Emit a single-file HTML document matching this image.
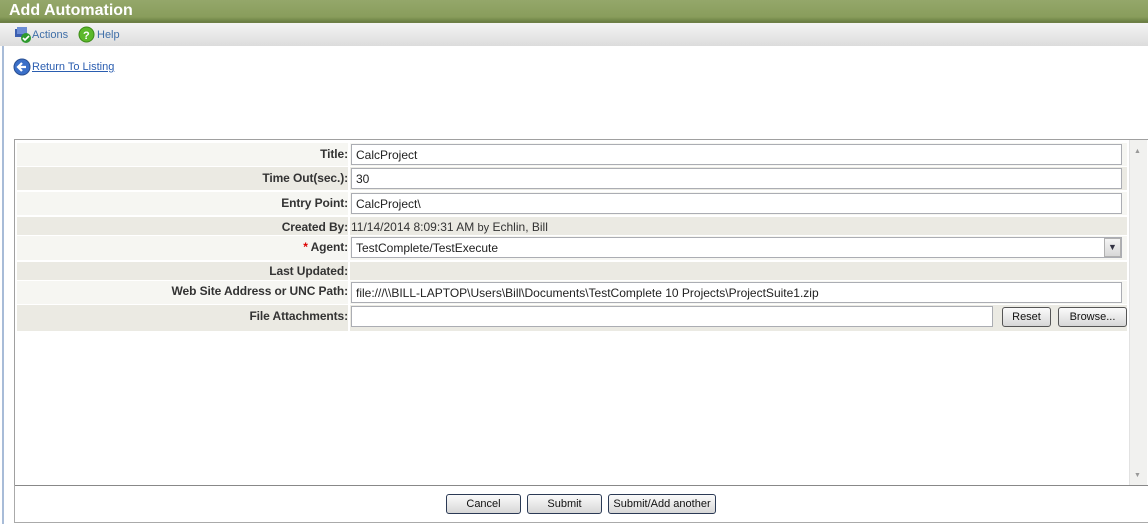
<!DOCTYPE html>
<html><head><meta charset="utf-8"><style>
*{margin:0;padding:0;box-sizing:border-box}
body{width:1148px;height:524px;background:#fff;font-family:"Liberation Sans",Arial,sans-serif;position:relative;overflow:hidden}
.abs{position:absolute}
.title{left:0;top:0;width:1148px;height:23px;background:linear-gradient(#94a76a,#899d5c 80%,#6f8447);color:#fff;font-weight:bold;font-size:16px;padding:2px 0 0 9px;border-bottom:2px solid #6d7f45}
.tool{left:0;top:23px;width:1148px;height:23px;background:linear-gradient(#f4f4f4,#dcdcdc);font-size:11px;color:#3f6fa8}
.lbl{right:800px;font-size:12px;font-weight:bold;color:#333;text-align:right;letter-spacing:-0.1px}
.row{left:17px;width:1110px}
.inp{left:351px;height:21px;border:1px solid #abadb3;background:#fff;font-size:12px;padding:3px 4px;color:#222}
.btn{height:20px;border:1px solid #2b3a55;border-radius:3px;background:linear-gradient(#fafafa,#e6e6e6 60%,#d6d6d6);font-size:11px;text-align:center;line-height:18px;color:#111}
</style></head><body>
<div class="abs" style="left:2px;top:0;width:2px;height:524px;background:#a8bcd8"></div>
<div class="abs title">Add Automation</div>
<div class="abs tool">
 <svg class="abs" style="left:14px;top:4px" width="18" height="16"><rect x="1" y="2" width="11" height="8" fill="#3c5fb0"/><rect x="3" y="0" width="10" height="7" fill="#6d8ed6"/><circle cx="12" cy="11" r="5" fill="#2e9a2e"/><path d="M9 11l2 2 4-4" stroke="#fff" stroke-width="1.6" fill="none"/></svg>
 <span class="abs" style="left:32px;top:6px">Actions</span>
 <svg class="abs" style="left:78px;top:3px" width="17" height="17"><circle cx="8.5" cy="8.5" r="7.5" fill="#5cb82a" stroke="#3c8a18"/><text x="5" y="13" font-size="11" font-weight="bold" fill="#fff" font-family="Liberation Sans">?</text></svg>
 <span class="abs" style="left:97px;top:6px">Help</span>
</div>
<svg class="abs" style="left:13px;top:58px" width="18" height="18"><circle cx="9" cy="9" r="8" fill="#3a6fc8" stroke="#2a4f90"/><path d="M13 9H6M9 5L5 9l4 4" stroke="#fff" stroke-width="2.2" fill="none"/></svg>
<a class="abs" style="left:32px;top:61px;font-size:11px;color:#2a5db0;text-decoration:underline">Return To Listing</a>

<div class="abs" style="left:14px;top:139px;width:1134px;height:347px;border:1px solid #a0a0a0;border-right:none"></div>
<div class="abs" style="left:1129px;top:140px;width:18px;height:345px;background:#f1f1ef;border-left:1px solid #e2e2e2"></div>
<div class="abs" style="left:1134px;top:148px;font-size:7px;color:#999">▲</div>
<div class="abs" style="left:1134px;top:472px;font-size:7px;color:#999">▼</div>

<div class="abs row" style="top:143px;height:23px;background:#f6f6f2"></div>
<div class="abs row" style="top:167px;height:23px;background:#ebeae3"></div>
<div class="abs row" style="top:192px;height:23px;background:#f6f6f2"></div>
<div class="abs row" style="top:217px;height:18px;background:#ebeae3"></div>
<div class="abs row" style="top:236px;height:24px;background:#f6f6f2"></div>
<div class="abs row" style="top:262px;height:18px;background:#ebeae3"></div>
<div class="abs row" style="top:281px;height:23px;background:#f6f6f2"></div>
<div class="abs row" style="top:305px;height:26px;background:#ebeae3"></div>
<div class="abs" style="left:348px;top:143px;width:2px;height:188px;background:#fff"></div>

<div class="abs lbl" style="top:147px">Title:</div>
<div class="abs lbl" style="top:171px">Time Out(sec.):</div>
<div class="abs lbl" style="top:196px">Entry Point:</div>
<div class="abs lbl" style="top:220px">Created By:</div>
<div class="abs lbl" style="top:240px"><span style="color:#d00">*</span> Agent:</div>
<div class="abs lbl" style="top:264px">Last Updated:</div>
<div class="abs lbl" style="top:284px">Web Site Address or UNC Path:</div>
<div class="abs lbl" style="top:309px">File Attachments:</div>

<div class="abs inp" style="top:144px;width:771px">CalcProject</div>
<div class="abs inp" style="top:168px;width:771px">30</div>
<div class="abs inp" style="top:193px;width:771px">CalcProject\</div>
<div class="abs" style="left:351px;top:220px;font-size:12px;color:#333">11/14/2014 8:09:31 AM <span style="font-size:11px">by</span> Echlin, Bill</div>
<div class="abs inp" style="top:237px;width:771px">TestComplete/TestExecute</div>
<div class="abs" style="left:1104px;top:238px;width:17px;height:19px;background:linear-gradient(#f4f4f4,#d8d8d8);border:1px solid #b0b0b0;font-size:9px;color:#334;text-align:center;line-height:17px">▼</div>
<div class="abs inp" style="top:282px;width:771px">file:///\\BILL-LAPTOP\Users\Bill\Documents\TestComplete 10 Projects\ProjectSuite1.zip</div>
<div class="abs inp" style="top:306px;width:642px"></div>
<div class="abs btn" style="left:1002px;top:307px;width:49px;border-color:#555">Reset</div>
<div class="abs btn" style="left:1058px;top:307px;width:69px;border-color:#555">Browse...</div>

<div class="abs" style="left:14px;top:485px;width:1134px;height:1px;background:#888"></div>
<div class="abs" style="left:14px;top:485px;width:1px;height:38px;background:#aaa"></div>
<div class="abs" style="left:14px;top:522px;width:1134px;height:1px;background:#aaa"></div>
<div class="abs btn" style="left:446px;top:494px;width:75px">Cancel</div>
<div class="abs btn" style="left:527px;top:494px;width:75px">Submit</div>
<div class="abs btn" style="left:608px;top:494px;width:108px">Submit/Add another</div>
</body></html>
